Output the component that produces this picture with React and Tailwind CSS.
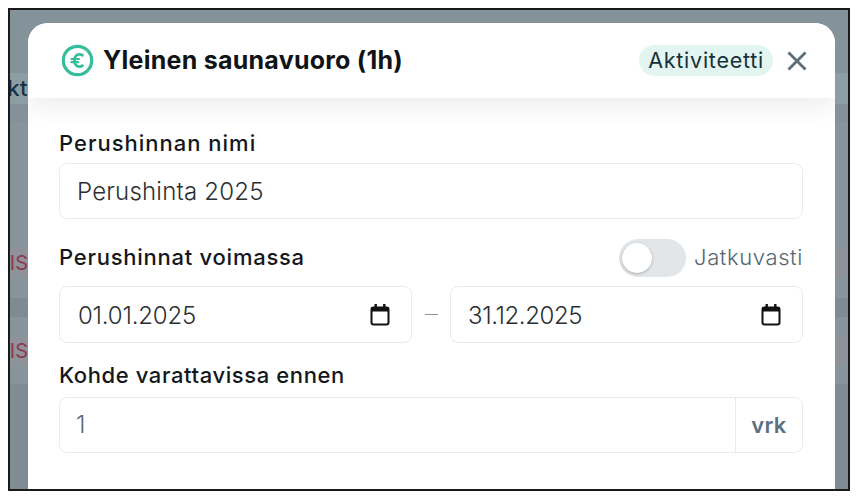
import React from "react";

function CalendarIcon() {
  return (
    <svg width="20" height="24" viewBox="0 0 20 24" fill="none" className="shrink-0">
      <rect x="1.5" y="4.5" width="17" height="17" rx="2" stroke="#111" strokeWidth="2" />
      <rect x="1" y="4" width="18" height="4.5" fill="#111" />
      <rect x="4.5" y="1" width="2.4" height="4" fill="#111" />
      <rect x="13.1" y="1" width="2.4" height="4" fill="#111" />
    </svg>
  );
}

function Peek({ children, className }) {
  return (
    <div className={"flex w-[18px] justify-end whitespace-nowrap " + className}>{children}</div>
  );
}

export default function App() {
  return (
    <div className="h-[498px] w-[860px] bg-white p-2 font-['Inter',sans-serif]">
      <div className="relative h-[483px] w-[842px] overflow-hidden border-2 border-[#1a1a1a] bg-[#84919a]">
        <div className="flex h-full flex-col">
          <div className="h-[63px] bg-[#84929a]" />
          <div className="flex h-[31px] items-center bg-[#8c9da3]">
            <Peek className="text-[22px] font-medium tracking-[0.5px] text-[#173246]">kt</Peek>
          </div>
          <div className="h-[18px] bg-[#84919a]" />
          <div className="h-[126px] bg-[#87949c]" />
          <div className="flex h-[30px] items-center bg-[#8f9299]">
            <Peek className="-mr-[2px] text-[20px] font-normal text-[#8c3a4e]">VIS</Peek>
          </div>
          <div className="h-[20px] bg-[#87949c]" />
          <div className="h-[19px] bg-[#7e8b93]" />
          <div className="h-[20px] bg-[#87949c]" />
          <div className="flex h-[28px] items-center bg-[#8f9299]">
            <Peek className="-mr-[2px] text-[20px] font-normal text-[#8c3a4e]">VIS</Peek>
          </div>
          <div className="h-[19px] bg-[#87949c]" />
          <div className="flex-1 bg-[#7f8c94]" />
        </div>

        <div className="absolute left-[18px] top-[13px] h-[520px] w-[807px] overflow-hidden rounded-[20px] bg-white">
          <header className="relative z-10 flex h-[75px] items-center bg-white pl-[33px] pr-[28px] shadow-[0_8px_24px_rgba(60,70,80,0.10)]">
            <svg width="33" height="33" viewBox="0 0 33 33" fill="none" className="shrink-0">
              <circle cx="16.5" cy="16.5" r="14.2" stroke="#36bd9b" strokeWidth="3.2" />
              <path d="M21.4 11.2a5.6 5.6 0 0 0-3-.8c-3 0-5 2.5-5 6.1s2 6.1 5 6.1c1.1 0 2.1-.3 3-.8" stroke="#36bd9b" strokeWidth="2.8" strokeLinecap="round" />
              <path d="M10.4 15h7.6M10.4 18.2h6.8" stroke="#36bd9b" strokeWidth="2.2" strokeLinecap="round" />
            </svg>
            <h1 className="ml-[9px] text-[25px] font-bold tracking-[0.25px] text-[#111417]">Yleinen saunavuoro (1h)</h1>
            <span className="ml-auto flex h-[31px] items-center rounded-full bg-[#e3f5f1] px-[9px] text-[21.5px] font-normal leading-none tracking-[0.75px] text-[#16303a]">Aktiviteetti</span>
            <button className="ml-[14px] flex size-[20px] items-center justify-center" aria-label="Sulje">
              <svg width="20" height="20" viewBox="0 0 20 20" fill="none">
                <path d="M1.5 1.5l17 17M18.5 1.5l-17 17" stroke="#5d6d78" strokeWidth="2.8" />
              </svg>
            </button>
          </header>

          <div className="pl-[31px] pr-[32px]">
            <label className="mt-[32px] block text-[22px] font-medium leading-[26px] tracking-[1px] text-[#14181c]">Perushinnan nimi</label>
            <div className="mt-[7px] flex h-[56px] items-center rounded-lg border border-[#e8ebed] bg-white pl-[17px]">
              <span className="pt-[2px] text-[24px] font-light tracking-[0.2px] text-[#2b2f33]">Perushinta 2025</span>
            </div>

            <div className="mt-[20px] flex h-[38px] items-center justify-between">
              <span className="pb-[2px] text-[22px] font-medium tracking-[0.75px] text-[#14181c]">Perushinnat voimassa</span>
              <div className="flex items-center gap-[8px]">
                <div className="flex h-[38px] w-[67px] items-center rounded-full bg-[#e2e6e9] pl-[3px]">
                  <div className="size-[30px] rounded-full bg-white shadow-[0_1px_3px_rgba(0,0,0,0.25)]" />
                </div>
                <span className="pb-[2px] text-[22px] font-light tracking-[0.6px] text-[#566773]">Jatkuvasti</span>
              </div>
            </div>

            <div className="mt-[9px] flex items-center">
              <div className="flex h-[57px] w-[353px] shrink-0 items-center justify-between rounded-lg border border-[#e8ebed] bg-white pl-[18px] pr-[21px]">
                <span className="pt-[2px] text-[24px] font-light tracking-[-0.2px] text-[#2b2f33]">01.01.2025</span>
                <CalendarIcon />
              </div>
              <span className="ml-[13px] mr-[12px] h-px w-[13px] bg-[#8a99a3]" />
              <div className="flex h-[57px] flex-1 items-center justify-between rounded-lg border border-[#e8ebed] bg-white pl-[17px] pr-[21px]">
                <span className="pt-[2px] text-[24px] font-light tracking-[-0.4px] text-[#2b2f33]">31.12.2025</span>
                <CalendarIcon />
              </div>
            </div>

            <label className="mt-[19px] block text-[22px] font-medium leading-[26px] tracking-[0.6px] text-[#14181c]">Kohde varattavissa ennen</label>
            <div className="mt-[9px] flex h-[56px] items-stretch rounded-lg border border-[#e8ebed] bg-white">
              <span className="flex flex-1 items-center pl-[16px] text-[24px] font-light text-[#5d6a73]">1</span>
              <span className="flex w-[67px] items-center justify-center border-l border-[#e8ebed] text-[22px] font-semibold tracking-[0.3px] text-[#5e7180]">vrk</span>
            </div>
          </div>
        </div>
      </div>
    </div>
  );
}
